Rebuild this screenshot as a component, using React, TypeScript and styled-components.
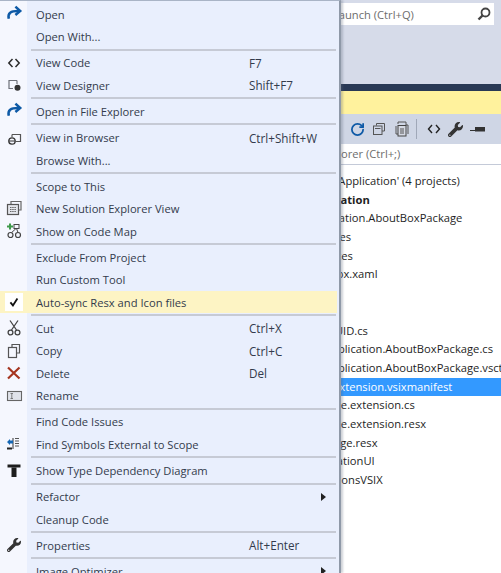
import React, { ReactNode } from "react";
import styled, { createGlobalStyle } from "styled-components";
import { RotateCw } from "lucide-react";
import { FaWrench } from "react-icons/fa";

const GlobalStyle = createGlobalStyle`
    html,
    body {
        margin: 0;
        padding: 0;
        background: #ffffff;
    }
`;

const FONT = `"Open Sans", "Liberation Sans", sans-serif`;

const Icon: React.FC<{ children: ReactNode }> = ({ children }) => (
    <svg width="20" height="20" viewBox="0 0 20 20" fill="none">
        {children}
    </svg>
);

const OpenIcon = () => (
    <Icon>
        <path d="M4.8 14.8C3.4 9 6.5 6.8 15 7" stroke="#0e5aa6" strokeWidth="2.5" />
        <path d="M11.4 2.6L16.2 7L11.4 11" stroke="#0e5aa6" strokeWidth="2.5" />
    </Icon>
);

const CodeIcon = () => (
    <Icon>
        <path d="M8.5 6L4.8 10L8.5 14M11.5 6L15.2 10L11.5 14" stroke="#2b2b2b" strokeWidth="1.5" />
    </Icon>
);

const DesignerIcon = () => (
    <Icon>
        <path d="M13 5.5H5V13.5H9" stroke="#6d7078" strokeWidth="1.2" />
        <path d="M13 5.5V9" stroke="#6d7078" strokeWidth="1.2" />
        <circle cx="13.5" cy="12.8" r="3" fill="#333" />
    </Icon>
);

const BrowserIcon = () => (
    <Icon>
        <path d="M8 6.5H16.5V13.5H12" stroke="#555" strokeWidth="1.2" />
        <path d="M8 6.5V9" stroke="#555" strokeWidth="1.2" />
        <circle cx="8" cy="13" r="3.2" stroke="#333" strokeWidth="1.3" />
        <path d="M4.8 13H11.2" stroke="#333" />
    </Icon>
);

const NewViewIcon = () => (
    <Icon>
        <path d="M7 5V2.5H17V11H14.5" stroke="#666" strokeWidth="1.2" />
        <rect x="3.5" y="5.5" width="11" height="10" fill="#e4e6ec" stroke="#555" strokeWidth="1.2" />
        <path d="M6 8.5H12M6 10.5H12M6 12.5H12" stroke="#666" strokeDasharray="1.5 .7" />
    </Icon>
);

const MapIcon = () => (
    <Icon>
        <path d="M3 5.5H9M6 2.5V8.5" stroke="#3f9a4a" strokeWidth="2" />
        <rect x="10" y="3.5" width="5" height="4" stroke="#444" />
        <circle cx="6.5" cy="14" r="2.5" stroke="#444" strokeWidth="1.2" />
        <circle cx="14" cy="14" r="2.5" stroke="#444" strokeWidth="1.2" />
        <path d="M12 7.5L7.5 11.7M12.5 7.5L14 11.5" stroke="#444" />
    </Icon>
);

const CheckIcon = () => (
    <Icon>
        <path d="M6 10.5L8.8 13.8L13.8 6" stroke="#111" strokeWidth="2" />
    </Icon>
);

const CutIcon = () => (
    <Icon>
        <path d="M6 2.5L12.5 12M14 2.5L7.5 12" stroke="#444" strokeWidth="1.3" />
        <circle cx="6.5" cy="14.5" r="2.4" stroke="#444" strokeWidth="1.3" />
        <circle cx="13.5" cy="14.5" r="2.4" stroke="#444" strokeWidth="1.3" />
    </Icon>
);

const CopyIcon = () => (
    <Icon>
        <path d="M8 6V3.5H15.5V12H12.5" stroke="#555" strokeWidth="1.2" />
        <rect x="4.5" y="6.5" width="8" height="10" stroke="#555" strokeWidth="1.2" />
    </Icon>
);

const DeleteIcon = () => (
    <Icon>
        <path d="M4 4.5L15.5 15.5M15.5 4.5L4 15.5" stroke="#a5351f" strokeWidth="2.2" />
    </Icon>
);

const RenameIcon = () => (
    <Icon>
        <rect x="3.5" y="5.5" width="14" height="9" fill="#e0e3ea" stroke="#666" strokeWidth="1.1" />
        <path d="M6.5 7.5H9M6.5 12.5H9M7.8 7.5V12.5" stroke="#666" strokeWidth=".8" />
    </Icon>
);

const FindSymbolsIcon = () => (
    <Icon>
        <path d="M9 4V15" stroke="#444" strokeWidth="1.1" />
        <path d="M11 4.5H15M11 7H15M11 9.5H15M11 12H15" stroke="#555" strokeWidth="1.1" />
        <path d="M9 6.5H6V5L3 8L6 11V9.5H9Z" fill="#1467b5" />
        <path d="M3 13.5H8V15.5H3Z" fill="#222" />
    </Icon>
);

const TypeIcon = () => (
    <Icon>
        <path d="M3.5 3.5H16.5V6.5H3.5Z" fill="#1d1d1d" />
        <path d="M7.5 6.5H12.5V16H7.5Z" fill="#1d1d1d" />
    </Icon>
);

const WrenchIcon = () => (
    <IconBox>
        <FaWrench size={14} color="#333" />
    </IconBox>
);

const ArrowGlyph = () => (
    <svg width="5" height="8" viewBox="0 0 5 8">
        <path d="M0 0L5 4L0 8Z" fill="#222" />
    </svg>
);

const IconBox = styled.span`
    display: flex;
    align-items: center;
    justify-content: center;
    width: 20px;
    height: 20px;
`;

type MenuEntry =
    | { sep: true }
    | { label: string; icon?: ReactNode; shortcut?: string; submenu?: boolean; checked?: boolean };

const MENU: MenuEntry[] = [
    { label: "Open", icon: <OpenIcon /> },
    { label: "Open With..." },
    { sep: true },
    { label: "View Code", icon: <CodeIcon />, shortcut: "F7" },
    { label: "View Designer", icon: <DesignerIcon />, shortcut: "Shift+F7" },
    { sep: true },
    { label: "Open in File Explorer", icon: <OpenIcon /> },
    { sep: true },
    { label: "View in Browser", icon: <BrowserIcon />, shortcut: "Ctrl+Shift+W" },
    { label: "Browse With..." },
    { sep: true },
    { label: "Scope to This" },
    { label: "New Solution Explorer View", icon: <NewViewIcon /> },
    { label: "Show on Code Map", icon: <MapIcon /> },
    { sep: true },
    { label: "Exclude From Project" },
    { label: "Run Custom Tool" },
    { label: "Auto-sync Resx and Icon files", icon: <CheckIcon />, checked: true },
    { sep: true },
    { label: "Cut", icon: <CutIcon />, shortcut: "Ctrl+X" },
    { label: "Copy", icon: <CopyIcon />, shortcut: "Ctrl+C" },
    { label: "Delete", icon: <DeleteIcon />, shortcut: "Del" },
    { label: "Rename", icon: <RenameIcon /> },
    { sep: true },
    { label: "Find Code Issues" },
    { label: "Find Symbols External to Scope", icon: <FindSymbolsIcon /> },
    { sep: true },
    { label: "Show Type Dependency Diagram", icon: <TypeIcon /> },
    { sep: true },
    { label: "Refactor", submenu: true },
    { label: "Cleanup Code" },
    { sep: true },
    { label: "Properties", icon: <WrenchIcon />, shortcut: "Alt+Enter" },
    { sep: true },
    { label: "Image Optimizer", submenu: true },
];

const TREE: { label: string; indent: number; bold?: boolean; selected?: boolean }[] = [
    { label: "Solution 'Application' (4 projects)", indent: 290 },
    { label: "Application", indent: 306, bold: true },
    { label: "Application.AboutBoxPackage", indent: 307 },
    { label: "Properties", indent: 297 },
    { label: "References", indent: 295 },
    { label: "AboutBox.xaml", indent: 298 },
    { label: "", indent: 0 },
    { label: "", indent: 0 },
    { label: "PackageGUID.cs", indent: 284 },
    { label: "Application.AboutBoxPackage.cs", indent: 324 },
    { label: "Application.AboutBoxPackage.vsct", indent: 324 },
    { label: "source.extension.vsixmanifest", indent: 295, selected: true },
    { label: "source.extension.cs", indent: 312 },
    { label: "source.extension.resx", indent: 312 },
    { label: "VSPackage.resx", indent: 297 },
    { label: "ApplicationUI", indent: 305 },
    { label: "ExtensionsVSIX", indent: 304 },
];

export default function App() {
    return (
        <Page>
            <GlobalStyle />
            <TitleBar>
                <QuickLaunch>
                    <QuickLaunchText>Search Quick Launch (Ctrl+Q)</QuickLaunchText>
                    <svg width="14" height="14" viewBox="0 0 14 14" fill="none">
                        <circle cx="8.5" cy="5.5" r="4" stroke="#444" strokeWidth="1.8" />
                        <path d="M5.5 8.5L1.5 12.5" stroke="#444" strokeWidth="2.4" />
                    </svg>
                </QuickLaunch>
            </TitleBar>
            <DarkBand />
            <InfoBar />
            <Toolbar>
                <RotateCw size={15} color="#0e5aa6" strokeWidth={2.8} />
                <svg width="14" height="14" viewBox="0 0 14 14" fill="none">
                    <path d="M4.5 3.5V1.5H12.5V9H10" stroke="#555" />
                    <rect x="1.5" y="4" width="8.5" height="8.5" stroke="#555" />
                    <path d="M3 6.5H8.5" stroke="#555" />
                </svg>
                <svg width="16" height="16" viewBox="0 0 16 16" fill="none">
                    <path d="M5 3V1H13V4M3 5V13H5M13 4H15V13" stroke="#555" />
                    <rect x="5" y="4.5" width="8" height="10.5" fill="#d5d9e3" stroke="#444" />
                    <path d="M7 8H11M7 10H11M7 12H11" stroke="#555" />
                </svg>
                <ToolbarDivider />
                <svg width="14" height="14" viewBox="0 0 14 14" fill="none">
                    <path d="M5 3L1.5 7L5 11M9 3L12.5 7L9 11" stroke="#222" strokeWidth="1.4" />
                </svg>
                <FaWrench size={15} color="#333" />
                <svg width="16" height="10" viewBox="0 0 16 10" fill="none">
                    <path d="M0 6.5H5" stroke="#333" />
                    <path d="M5 3H15V7.5H5Z" fill="#333" />
                </svg>
            </Toolbar>
            <SearchBar>Search Solution Explorer (Ctrl+;)</SearchBar>
            <Tree>
                {TREE.map((row, index) => (
                    <TreeRow key={index} $selected={row.selected} $indent={row.indent} $bold={row.bold}>
                        {row.label}
                    </TreeRow>
                ))}
            </Tree>
            <Menu>
                {MENU.map((entry, index) =>
                    "sep" in entry ? (
                        <Separator key={index} />
                    ) : (
                        <MenuItem key={index} $checked={entry.checked}>
                            <Gutter>
                                {entry.checked ? <CheckBox>{entry.icon}</CheckBox> : entry.icon}
                            </Gutter>
                            <Label>{entry.label}</Label>
                            <Shortcut>{entry.shortcut}</Shortcut>
                            <Submenu>{entry.submenu ? <ArrowGlyph /> : null}</Submenu>
                        </MenuItem>
                    )
                )}
            </Menu>
        </Page>
    );
}

const Page = styled.div`
    position: relative;
    display: flex;
    flex-direction: column;
    width: 501px;
    height: 573px;
    overflow: hidden;
    font-family: ${FONT};
    background: #ffffff;
`;

const TitleBar = styled.div`
    height: 84px;
    padding: 3px 7px 0 0;
    box-sizing: border-box;
    display: flex;
    justify-content: flex-end;
    align-items: flex-start;
    background: #d6dbe9;
`;

const QuickLaunch = styled.div`
    display: flex;
    align-items: center;
    justify-content: space-between;
    width: 300px;
    height: 22px;
    padding: 0 3px 0 0;
    box-sizing: border-box;
    background: #ffffff;
`;

const QuickLaunchText = styled.span`
    margin-left: 68px;
    font-size: 11.2px;
    color: #6d6d6d;
`;

const DarkBand = styled.div`
    height: 7px;
    background: #293955;
`;

const InfoBar = styled.div`
    height: 23px;
    background: #fff29d;
`;

const Toolbar = styled.div`
    height: 30px;
    padding-left: 350px;
    box-sizing: border-box;
    display: flex;
    align-items: center;
    gap: 7px;
    background: #cfd6e5;
`;

const ToolbarDivider = styled.span`
    width: 1px;
    height: 20px;
    margin-right: 3px;
    background: #a0a8b8;
`;

const SearchBar = styled.div`
    height: 21px;
    line-height: 20px;
    padding-left: 235px;
    box-sizing: border-box;
    font-size: 11.2px;
    color: #6d6d6d;
    background: #ffffff;
    border-bottom: 1px solid #c4cad8;
`;

const Tree = styled.div`
    flex: 1;
    padding-top: 7px;
    background: #ffffff;
`;

const TreeRow = styled.div<{ $selected?: boolean; $indent: number; $bold?: boolean }>`
    height: 18.7px;
    line-height: 18.7px;
    padding-left: ${({ $indent }) => $indent}px;
    font-size: 11.2px;
    white-space: nowrap;
    font-weight: ${({ $bold }) => ($bold ? 700 : 400)};
    color: ${({ $selected }) => ($selected ? "#ffffff" : "#1e1e1e")};
    background: ${({ $selected }) => ($selected ? "#3399ff" : "transparent")};
`;

const Menu = styled.div`
    position: absolute;
    top: 0;
    left: 0;
    width: 341px;
    height: 573px;
    box-sizing: border-box;
    padding-top: 2px;
    overflow: hidden;
    border-top: 1px solid #a9b4c6;
    border-right: 2px solid #8f99a8;
    box-shadow: 2px 0 2px rgba(90, 100, 120, 0.3);
    background: linear-gradient(to right, #f5f7fe 27px, #e9effd 27px);
`;

const MenuItem = styled.div<{ $checked?: boolean }>`
    display: grid;
    grid-template-columns: 36px 213px 1fr 16px;
    align-items: center;
    height: 22.5px;
    font-size: 11.2px;
    color: #333b4c;
    background: ${({ $checked }) => ($checked ? "#fdf4c4" : "transparent")};
    margin-right: 2px;
`;

const Gutter = styled.span`
    display: flex;
    align-items: center;
    justify-content: center;
    width: 27px;
`;

const CheckBox = styled.span`
    display: flex;
    align-items: center;
    justify-content: center;
    width: 18px;
    height: 18px;
    background: #ffffff;
`;

const Label = styled.span`
    white-space: nowrap;
`;

const Shortcut = styled.span`
    white-space: nowrap;
    font-size: 11.7px;
`;

const Submenu = styled.span`
    display: flex;
    align-items: center;
`;

const Separator = styled.div`
    height: 2px;
    margin: 0.8px 3px 0.8px 31px;
    background: #c6cad5;
`;
